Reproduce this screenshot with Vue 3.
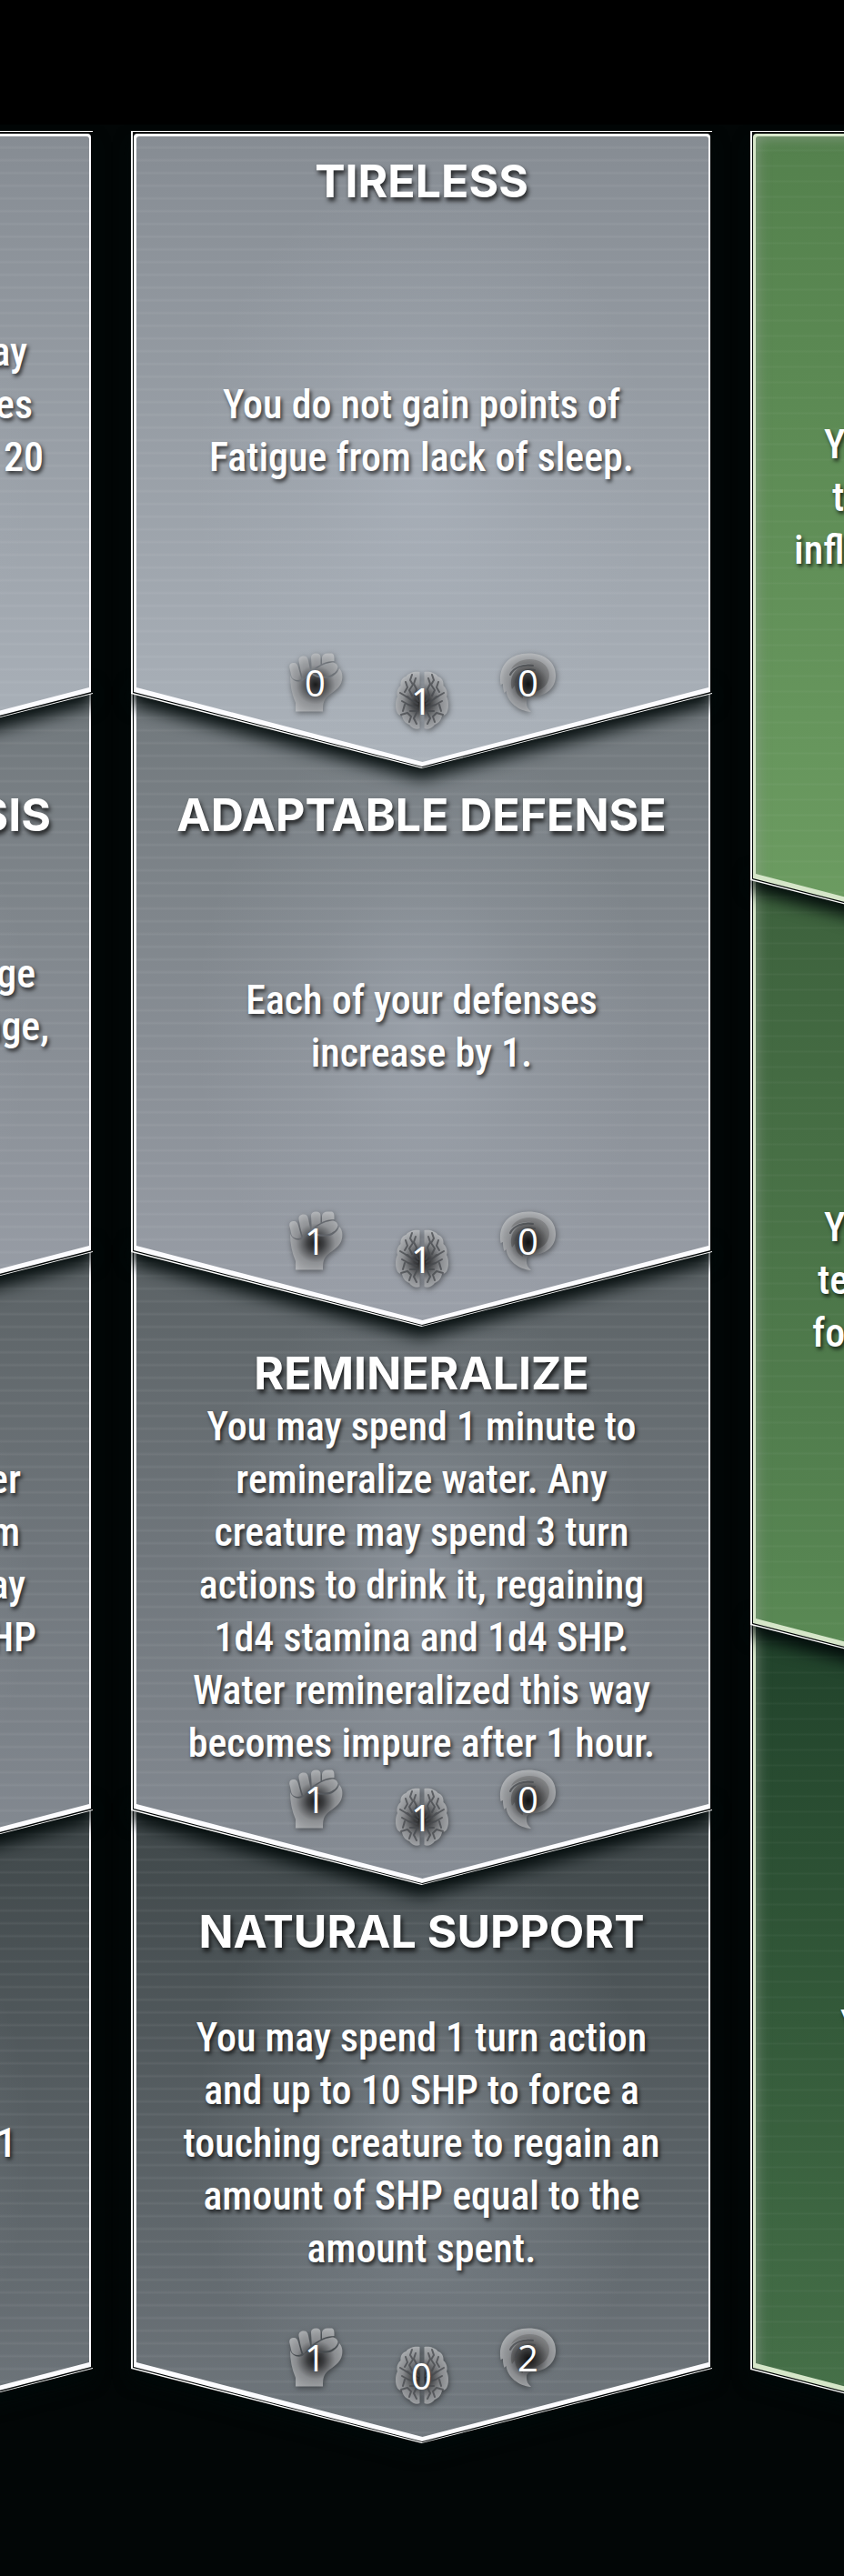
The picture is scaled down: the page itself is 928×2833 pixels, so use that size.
<script setup>
// `inset` is the distance of a cropped line from the inner edge of its banner.
const columns = [
  {
    id: 'left',
    side: 'end',
    tone: 'steel',
    panels: [
      { lines: [{ t: 'ay', inset: 72 }, { t: 'es', inset: 66 }, { t: '20', inset: 54 }, { t: '', inset: 0 }] },
      { title: 'SIS', titleInset: 46, lines: [{ t: 'ge', inset: 63 }, { t: 'age,', inset: 48 }, { t: '', inset: 0 }] },
      { lines: [{ t: 'er', inset: 79 }, { t: 'm', inset: 80 }, { t: 'ay', inset: 74 }, { t: 'SHP', inset: 62 }, { t: '', inset: 0 }] },
      { lines: [{ t: '', inset: 0 }, { t: '1', inset: 84 }, { t: '', inset: 0 }] }
    ]
  },
  {
    id: 'middle',
    side: 'center',
    tone: 'steel',
    panels: [
      { title: 'TIRELESS', stats: [0, 1, 0], lines: [{ t: 'You do not gain points of' }, { t: 'Fatigue from lack of sleep.' }] },
      { title: 'ADAPTABLE DEFENSE', stats: [1, 1, 0], lines: [{ t: 'Each of your defenses' }, { t: 'increase by 1.' }] },
      {
        title: 'REMINERALIZE',
        stats: [1, 1, 0],
        lines: [
          { t: 'You may spend 1 minute to' },
          { t: 'remineralize water. Any' },
          { t: 'creature may spend 3 turn' },
          { t: 'actions to drink it, regaining' },
          { t: '1d4 stamina and 1d4 SHP.' },
          { t: 'Water remineralized this way' },
          { t: 'becomes impure after 1 hour.' }
        ]
      },
      {
        title: 'NATURAL SUPPORT',
        stats: [1, 0, 2],
        lines: [
          { t: 'You may spend 1 turn action' },
          { t: 'and up to 10 SHP to force a' },
          { t: 'touching creature to regain an' },
          { t: 'amount of SHP equal to the' },
          { t: 'amount spent.' }
        ]
      }
    ]
  },
  {
    id: 'right',
    side: 'start',
    tone: 'moss',
    panels: [
      { lines: [{ t: 'Yo', inset: 81 }, { t: 't', inset: 90 }, { t: 'infl', inset: 48 }, { t: '', inset: 0 }] },
      { lines: [{ t: 'Yo', inset: 81 }, { t: 'te', inset: 74 }, { t: 'fo', inset: 68 }, { t: '', inset: 0 }] },
      { lines: [{ t: 'Y', inset: 99 }, { t: '', inset: 0 }] }
    ]
  }
]

const statNames = ['Body', 'Mind', 'Spirit']

function pad(side, inset) {
  if (side === 'end') return { paddingRight: inset + 'px' }
  if (side === 'start') return { paddingLeft: inset + 'px' }
  return null
}
</script>

<template>
  <div class="page">
    <svg class="defs" aria-hidden="true">
      <defs>
        <radialGradient id="metal" gradientUnits="userSpaceOnUse" cx="33" cy="35" r="36">
          <stop offset="0" stop-color="#161616" stop-opacity=".95" />
          <stop offset=".25" stop-color="#3c3d3f" stop-opacity=".85" />
          <stop offset=".6" stop-color="#9c9ea1" stop-opacity=".8" />
          <stop offset="1" stop-color="#c4c6c8" stop-opacity=".75" />
        </radialGradient>
        <radialGradient id="core" gradientUnits="userSpaceOnUse" cx="33" cy="34" r="26">
          <stop offset="0" stop-color="#111" stop-opacity=".9" />
          <stop offset=".4" stop-color="#333" stop-opacity=".6" />
          <stop offset="1" stop-color="#555" stop-opacity=".35" />
        </radialGradient>
      </defs>
    </svg>

    <div class="topbar"></div>

    <main class="board">
      <div v-for="col in columns" :key="col.id" class="column" :class="[col.tone, 'side-' + col.side]">
        <section
          v-for="(panel, i) in col.panels"
          :key="i"
          class="panel"
          :class="'shade-' + (i + 1)"
          :style="{ zIndex: col.panels.length - i }"
        >
          <div class="frame" aria-hidden="true">
            <div class="layer outer"></div>
            <div class="layer line"></div>
            <div class="layer inner"></div>
            <div class="layer fill"></div>
          </div>
          <header class="head">
            <h2 v-if="panel.title" class="title" :style="pad(col.side, panel.titleInset)">{{ panel.title }}</h2>
          </header>
          <p class="body">
            <span v-for="(line, n) in panel.lines" :key="n" class="row" :style="pad(col.side, line.inset)">{{ line.t }}</span>
          </p>
          <footer class="foot">
            <ul v-if="panel.stats" class="stats">
              <li v-for="(value, s) in panel.stats" :key="s" class="stat">
                <svg v-if="s === 0" class="icon" viewBox="0 0 66 66" role="img" :aria-label="statNames[s]">
                  <g fill="url(#metal)">
                    <path d="M4.5 17C3.5 12.5 6 11 9 11C12 11 13 12.5 14 16L17.5 29C13 31.5 8 29.5 6.5 26Z" />
                    <path d="M14.5 9C14 5 17 3.5 20 3.5C23 3.5 24.3 5 25 8.5L27.3 20L20 29C18.5 27 17.5 23 16.5 19Z" />
                    <path d="M28 5C28 2 30 .5 33.5 .5C37 .5 38.5 2 38.5 5V13C35 15 31 17 28.8 19Z" />
                    <path d="M40 5C40.5 2 43 .5 46 .5H50C53 .5 53.5 3 53.5 6V9C49 9 44 10 40 12Z" />
                    <path d="M30 21C35 16 41 12 51 10.5C55 10.5 57 13 57.5 15.5C57 20 53 23 48 25C42 26 36 26 30.5 23Z" />
                    <path d="M5 25C7 30 12 33 18.5 31L28 22.5C32 27 39 29 49 27C54 25 58 21 59 17C62 20 63 25 62 30C61 38 52 43 46 48C42 52 41 55 41 64.5H11V55C7 46 5 36 5 25Z" />
                  </g>
                </svg>
                <svg v-else-if="s === 1" class="icon" viewBox="0 0 66 66" role="img" :aria-label="statNames[s]">
                  <g v-for="side in [0, 1]" :key="side" :transform="side ? 'translate(66 0) scale(-1 1)' : undefined">
                    <path
                      fill="url(#metal)"
                      d="M30.5 1C25 0 18 2 15.5 6C11 7 9 12 9.5 16C6 19 4.5 24 6 28C3.5 32 3.5 40 5 44C6 48 9 49 11 49C12 55 16 58 19 59C22 63 27 65 30.5 63Z"
                    />
                    <path
                      class="fissure"
                      d="M22 4L20 10L23 15L19 21L22 27M26 8L24 14L27 20L25 27L29 33M15 12L17 18L14 23M9 24L14 27L20 31L28 36M11 33L18 37L27 40M14 37L12 44M20 44L28 44M10 48L17 46L21 50L19 56M27 46L24 52L27 58M20 31L17 28"
                    />
                  </g>
                </svg>
                <svg v-else class="icon" viewBox="0 0 66 66" role="img" :aria-label="statNames[s]">
                  <path
                    fill="url(#metal)"
                    d="M33 .5C52 .5 63 11 63 25C63 40 51 47 40 48C33 48.5 31 50 31 54C31 59 32 61 36 65C22 64 10 54 8.5 42L6.5 44C5 39 5 37 5 34L2.5 35C-1 15 12 .5 33 .5Z"
                  />
                  <path
                    fill="url(#core)"
                    d="M40 43C54 39 58 28 55 19C51 9 38 5 27 8C20 10 16 14 14 18C21 13 29 11 36 12C26 13 18 18 15 26C13 32 14 37 15 40L18 36C19 44 22 48 27 50C26 46 31 44 40 43Z"
                  />
                  <path class="fissure" d="M13 24C17 16 27 12 38 14M19 32C20 23 29 17 40 19" />
                </svg>
                <span class="value">{{ value }}</span>
              </li>
            </ul>
          </footer>
        </section>
      </div>
    </main>
  </div>
</template>

<style>
body {
  margin: 0;
  background: #020606;
}
</style>

<style scoped>
.page {
  overflow: hidden;
  background: #020606;
  color: #fff;
}

.defs {
  position: absolute;
  width: 0;
  height: 0;
}

.topbar {
  height: 137px;
  background: #000;
}

.board {
  display: grid;
  grid-template-columns: repeat(3, calc(100% - 288px));
  justify-content: center;
  gap: 42px;
  padding: 7px 1px 147px 0;
}

.column {
  display: flex;
  flex-direction: column;
  --pitch: 614px;
  --edge: #fcfcff;
}

.moss {
  --pitch: 819px;
  --edge: #d6e6c9;
}

.panel {
  position: relative;
  display: flex;
  flex-direction: column;
  box-sizing: border-box;
  min-height: calc(var(--pitch) + 102px);
  padding-top: 124px;
}

.panel + .panel {
  margin-top: -102px;
}

.panel:first-child {
  min-height: calc(var(--pitch) + 87px);
  padding-top: 26px;
}

.frame {
  position: absolute;
  inset: 0;
  filter: drop-shadow(0 12px 9px rgba(0, 8, 8, 0.95));
}

.layer {
  position: absolute;
  clip-path: polygon(0 0, 100% 0, 100% calc(100% - 82px), 50% 100%, 0 calc(100% - 82px));
}

.outer {
  inset: 0;
  background: #fff;
}

.line {
  inset: 1px 0 1px 2px;
  background: #020606;
}

.inner {
  inset: 3px 2px 2px 3px;
  border-radius: 4px 4px 0 0;
  background: var(--edge);
}

.fill {
  inset: 6px 4px 7px 6px;
  border-radius: 3px 3px 0 0;
  background:
    repeating-linear-gradient(to bottom, rgba(255, 255, 255, 0) 0 10px, rgba(255, 255, 255, 0.05) 12px 13px, rgba(255, 255, 255, 0) 14px),
    radial-gradient(ellipse 40% 48% at 50% 54%, rgba(188, 196, 208, 0.34), rgba(188, 196, 208, 0.12) 50%, rgba(188, 196, 208, 0) 100%),
    linear-gradient(to bottom, var(--from), var(--to));
}

.moss .fill {
  background:
    repeating-linear-gradient(to bottom, rgba(255, 255, 255, 0) 0 14px, rgba(255, 255, 255, 0.03) 15px 16px, rgba(255, 255, 255, 0) 17px),
    linear-gradient(to bottom, var(--from), var(--to));
  box-shadow: inset 0 0 16px rgba(160, 168, 160, 0.7);
}

.steel .shade-1 { --from: #868c93; --to: #abb2ba; }
.steel .shade-2 { --from: #70777b; --to: #9a9fa8; }
.steel .shade-3 { --from: #5a6164; --to: #868c94; }
.steel .shade-4 { --from: #3e4648; --to: #70777d; }
.moss .shade-1 { --from: #54814d; --to: #6d9d62; }
.moss .shade-2 { --from: #3c603c; --to: #5c8c56; }
.moss .shade-3 { --from: #20412a; --to: #48734a; }

.head {
  position: relative;
  height: 59px;
}

.title {
  margin: 0;
  font: 700 50px/59px Inter, "Liberation Sans", sans-serif;
  text-shadow: 2px 4px 5px rgba(0, 0, 0, 0.75);
}

.body {
  position: relative;
  display: flex;
  flex: 1;
  flex-direction: column;
  justify-content: center;
  margin: 0;
  font: 500 44px/58px "Roboto Condensed", Roboto, sans-serif;
  text-shadow: 2px 3px 4px rgba(0, 0, 0, 0.7);
}

.row {
  display: block;
  min-height: 58px;
  white-space: nowrap;
}

.side-center { text-align: center; }
.side-end { text-align: right; }
.side-start { text-align: left; }

.foot {
  position: relative;
  height: 127px;
}

.stats {
  display: flex;
  justify-content: center;
  margin: 0;
  padding: 0;
  list-style: none;
}

.stat {
  display: grid;
  place-items: center;
  width: 117px;
  height: 66px;
}

.stat:nth-child(2) {
  margin-top: 20px;
}

.icon,
.value {
  grid-area: 1 / 1;
}

.icon {
  width: 66px;
  height: 66px;
  filter: drop-shadow(1px 2px 3px rgba(0, 0, 0, 0.55));
}

.fissure {
  fill: none;
  stroke: rgba(70, 72, 76, 0.75);
  stroke-width: 2;
  stroke-linejoin: round;
  stroke-linecap: round;
}

.value {
  position: relative;
  font: 400 40px/66px "Open Sans", "Noto Sans", sans-serif;
}
</style>
